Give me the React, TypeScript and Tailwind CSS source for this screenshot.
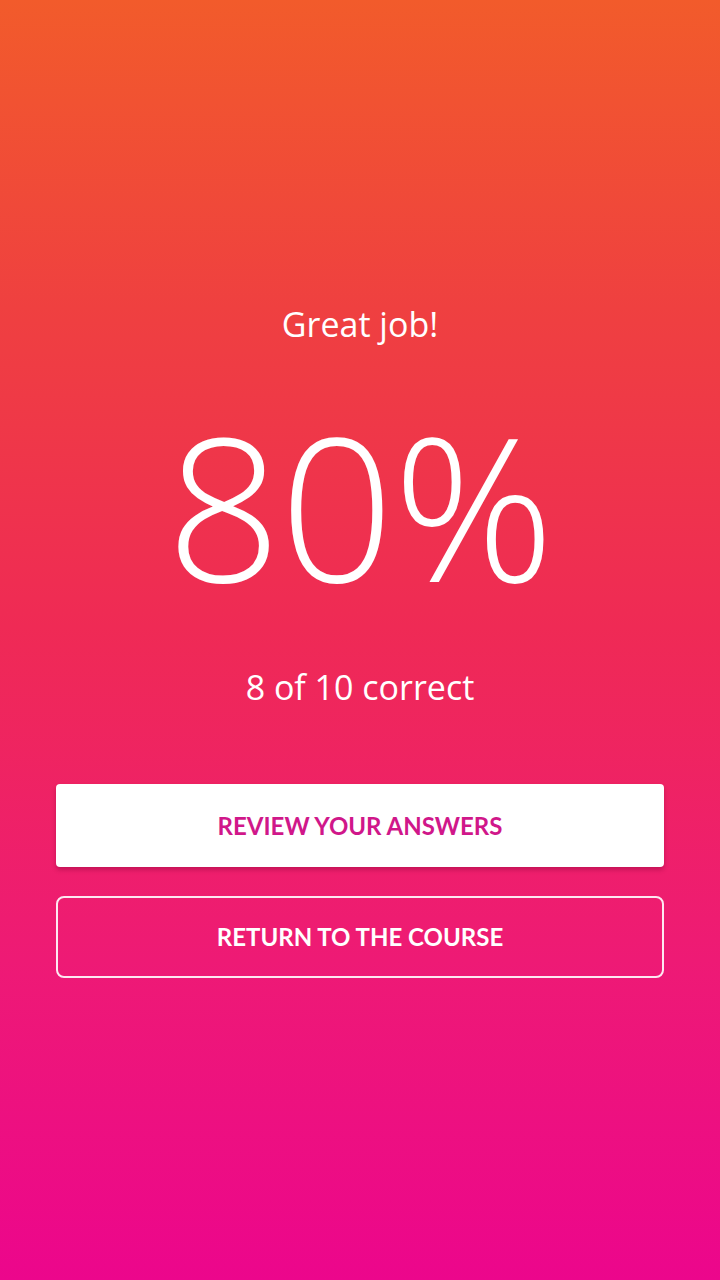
import React from 'react';

const App: React.FC = () => {
  return (
    <div className="w-[720px] h-[1280px] bg-[linear-gradient(to_bottom,#f25b2b_0%,#ef4040_24%,#ef2a55_49%,#ee1a75_75%,#ec068c_100%)] flex flex-col items-center text-white font-['Open_Sans',sans-serif]">
      {/* 결과 텍스트 */}
      <p className="mt-[307px] text-[34px] leading-none">Great job!</p>
      <p className="mt-[64px] text-[200px] leading-none font-light tracking-[-1px]">80%</p>
      <p className="mt-[65px] text-[34px] leading-none">8 of 10 correct</p>

      {/* 액션 버튼 */}
      <div className="mt-[80px] w-full px-[56px] flex flex-col gap-[29px] font-['Lato',sans-serif]">
        <button className="h-[83px] w-full bg-white rounded-[4px] shadow-[0_3px_4px_rgba(120,0,50,0.35)] text-[24px] font-bold text-[#d0178a]">
          REVIEW YOUR ANSWERS
        </button>
        <button className="h-[82px] w-full rounded-[8px] border-2 border-white/90 text-[24px] font-bold text-white">
          RETURN TO THE COURSE
        </button>
      </div>
    </div>
  );
};

export default App;
